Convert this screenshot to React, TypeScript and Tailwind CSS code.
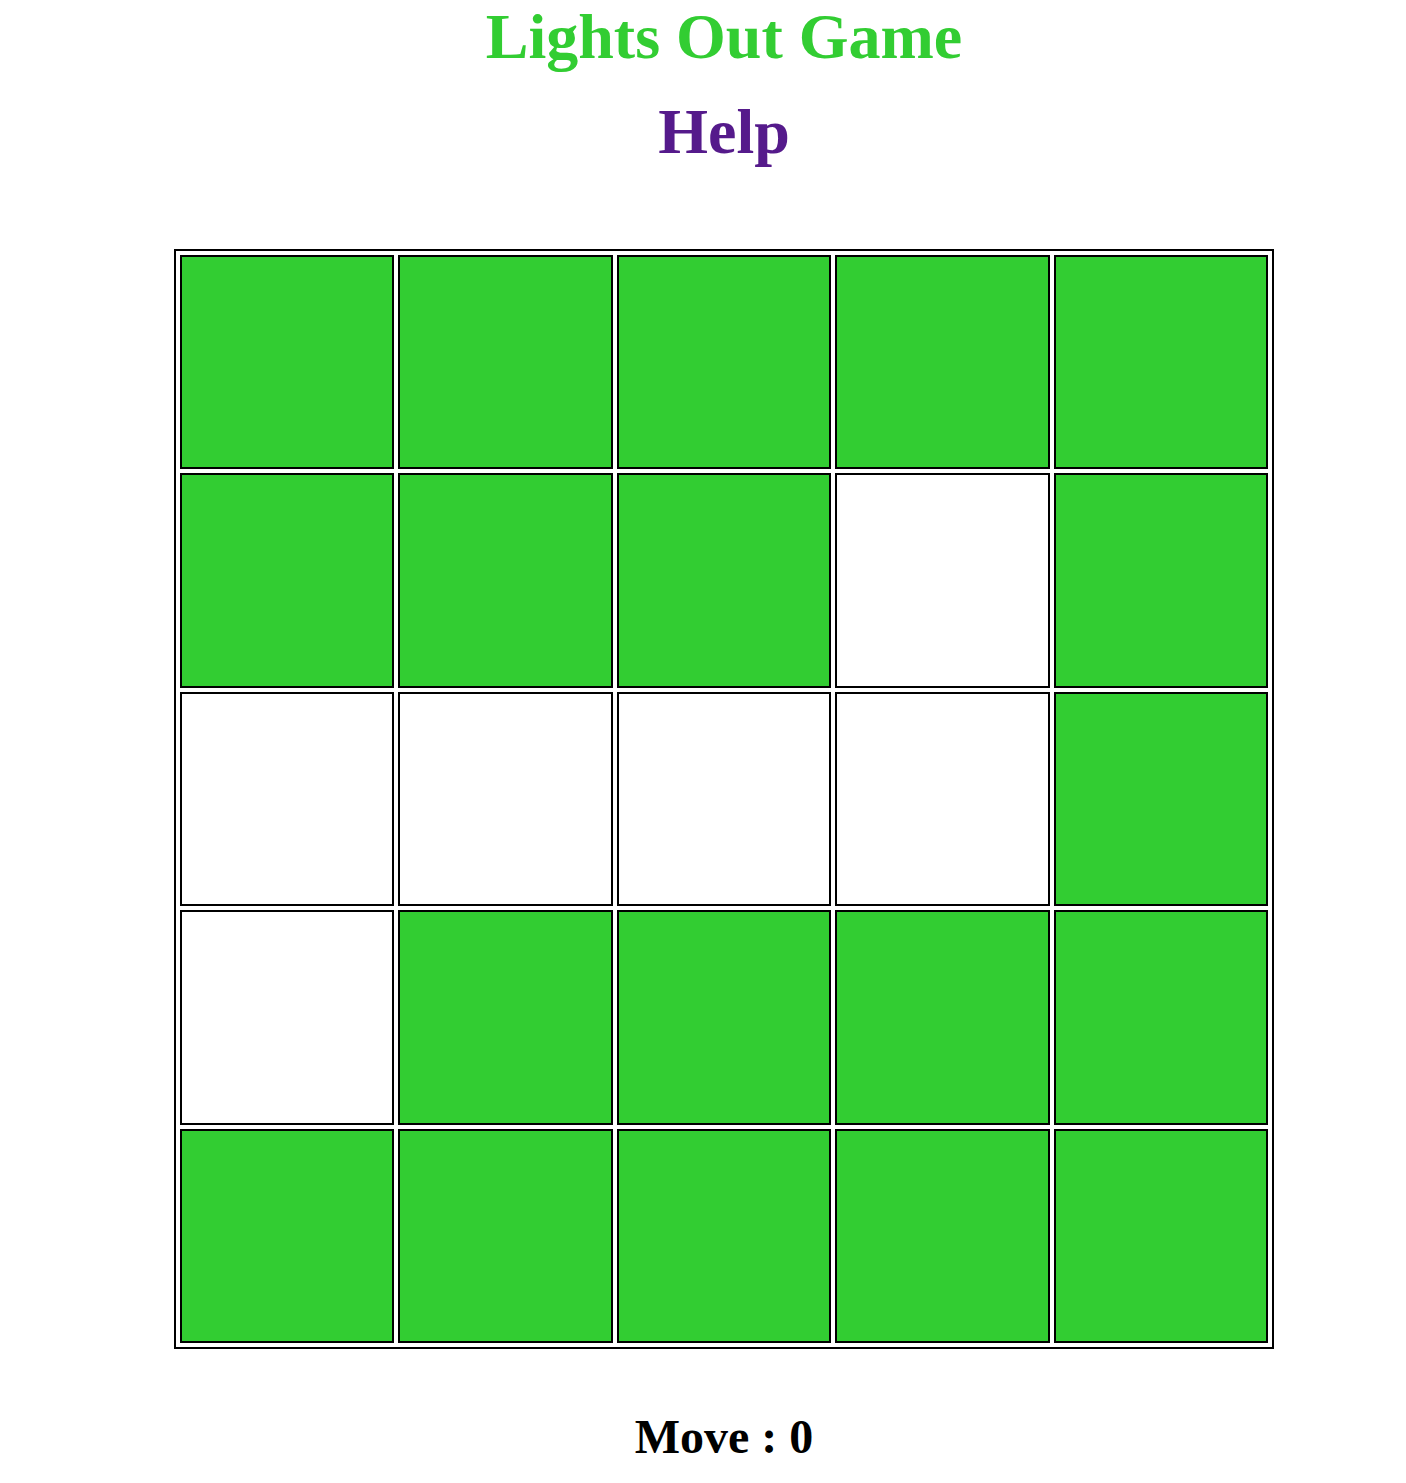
import { useState } from "react";

const START = [
  [1, 1, 1, 1, 1],
  [1, 1, 1, 0, 1],
  [0, 0, 0, 0, 1],
  [0, 1, 1, 1, 1],
  [1, 1, 1, 1, 1],
];

function App() {
  const [board, setBoard] = useState(START);
  const [moves, setMoves] = useState(0);

  // flip the clicked light and its four neighbours
  const toggle = (r: number, c: number) => {
    const next = board.map((row) => [...row]);
    const spots = [
      [r, c],
      [r - 1, c],
      [r + 1, c],
      [r, c - 1],
      [r, c + 1],
    ];
    spots.forEach(([y, x]) => {
      if (y >= 0 && y < 5 && x >= 0 && x < 5) next[y][x] = next[y][x] ? 0 : 1;
    });
    setBoard(next);
    setMoves(moves + 1);
  };

  return (
    <div className="min-h-screen bg-white pl-[42px] font-['Liberation_Serif',serif] font-bold">
      <div className="flex flex-col items-center">
        <h1 className="text-[64px] leading-[73px] text-[#32cd32]">Lights Out Game</h1>
        <h1 className="mt-[22px] text-[64px] leading-[73px]">
          <a href="#" className="text-[#551a8b] no-underline">
            Help
          </a>
        </h1>

        <div className="mt-[81px] grid w-[1100px] grid-cols-5 gap-[4px] border-2 border-black p-[4px]">
          {board.map((row, r) =>
            row.map((on, c) => (
              <button
                key={`${r}-${c}`}
                onClick={() => toggle(r, c)}
                className={`aspect-square border-2 border-black ${on ? "bg-[#32cd32]" : "bg-white"}`}
              />
            ))
          )}
        </div>

        <h2 className="mt-[60px] text-[48px] leading-[55px] text-black">Move : {moves}</h2>
      </div>
    </div>
  );
}

export default App;
